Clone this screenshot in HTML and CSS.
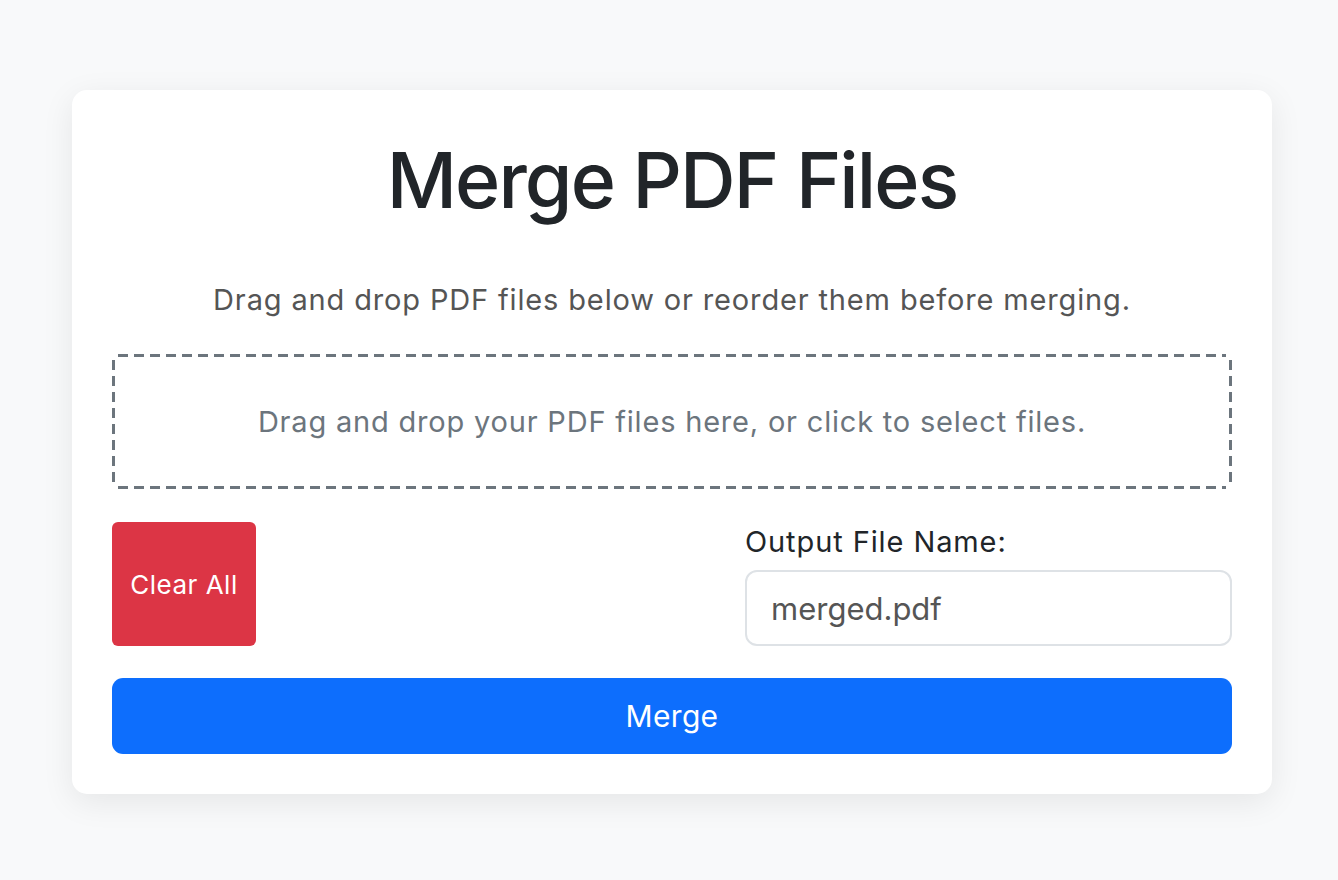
FILE: index.html
```html
<!DOCTYPE html>
<html lang="en">
<head>
<meta charset="utf-8">
<title>Merge PDF Files</title>
<link rel="stylesheet" href="styles.css">
</head>
<body>
  <main class="card">
    <h1 class="title">Merge PDF Files</h1>
    <p class="intro">Drag and drop PDF files below or reorder them before merging.</p>
    <div class="dropzone">Drag and drop your PDF files here, or click to select files.</div>
    <div class="controls">
      <button class="btn btn-clear" type="button">Clear All</button>
      <div class="output">
        <label class="output-label" for="outname">Output File Name:</label>
        <input class="output-input" id="outname" type="text" value="merged.pdf">
      </div>
    </div>
    <button class="btn btn-merge" type="button">Merge</button>
  </main>
</body>
</html>
```

FILE: styles.css
```css
* { box-sizing: border-box; }

html, body {
  margin: 0;
  padding: 0;
}

html {
  background: #f8f9fa;
}

body {
  font-family: Inter, "Noto Sans", "Liberation Sans", sans-serif;
  color: #212529;
  padding: 90px 0 60px;
}

.card {
  width: 1200px;
  margin: 0 0 0 72px;
  padding: 40px;
  background: #ffffff;
  border-radius: 15px;
  box-shadow: 0 8px 32px rgba(0, 0, 0, 0.08);
}

.title {
  margin: 0;
  font-size: 77px;
  line-height: 100px;
  font-weight: 500;
  text-align: center;
  color: #212529;
  letter-spacing: -1.9px;
}

.intro {
  margin: 50px 0 0;
  font-size: 29px;
  line-height: 40px;
  text-align: center;
  color: #555555;
  letter-spacing: 0.85px;
}

.dropzone {
  margin-top: 34px;
  height: 135px;
  border-radius: 5px;
  background:
    repeating-linear-gradient(90deg, #6c757d 0 10px, transparent 10px 16px) left 6px top 0 / calc(100% - 12px) 3px no-repeat,
    repeating-linear-gradient(90deg, #6c757d 0 10px, transparent 10px 16px) left 6px bottom 0 / calc(100% - 12px) 3px no-repeat,
    repeating-linear-gradient(180deg, #6c757d 0 10px, transparent 10px 16px) left 0 top 6px / 3px calc(100% - 12px) no-repeat,
    repeating-linear-gradient(180deg, #6c757d 0 10px, transparent 10px 16px) right 0 top 6px / 3px calc(100% - 12px) no-repeat;
  display: flex;
  align-items: center;
  justify-content: center;
  font-size: 29px;
  color: #6c757d;
  letter-spacing: 0.8px;
}

.controls {
  margin-top: 33px;
  display: flex;
  justify-content: space-between;
  align-items: stretch;
}

.btn {
  border: none;
  font-family: inherit;
  color: #ffffff;
  cursor: pointer;
}

.btn-clear {
  width: 144px;
  background: #dc3545;
  border-radius: 6px;
  font-size: 26px;
  letter-spacing: 0.5px;
  padding: 0 10px;
}

.output {
  width: 487px;
  display: flex;
  flex-direction: column;
}

.output-label {
  font-size: 29px;
  line-height: 40px;
  margin-bottom: 8px;
  color: #212529;
  letter-spacing: 0.9px;
}

.output-input {
  height: 76px;
  border: 2px solid #dee2e6;
  border-radius: 12px;
  padding: 0 24px;
  font-family: inherit;
  font-size: 31px;
  color: #555555;
  outline: none;
}

.btn-merge {
  display: block;
  width: 100%;
  margin-top: 32px;
  height: 76px;
  background: #0d6efd;
  border-radius: 11px;
  font-size: 30px;
  letter-spacing: 0.3px;
}
```
